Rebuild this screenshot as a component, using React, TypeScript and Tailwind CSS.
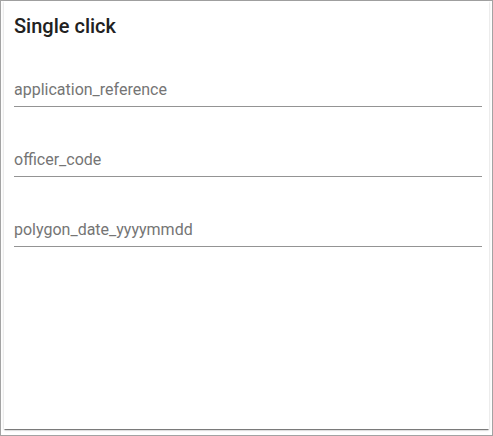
import React from "react";

const fields = ["application_reference", "officer_code", "polygon_date_yyyymmdd"];

export default function App() {
  return (
    <div
      className="w-[493px] h-[436px] border border-[#a3a3a3] bg-white flex flex-col"
      style={{ fontFamily: "Roboto, 'Liberation Sans', sans-serif" }}
    >
      <div className="ml-[3px] mr-[3px] h-[428px] bg-white shadow-[0_2px_1px_-1px_rgba(0,0,0,0.35),0_1px_1px_0_rgba(0,0,0,0.2),0_1px_3px_0_rgba(0,0,0,0.12)] pl-[10px] pr-[7px]">
        <div className="pt-[9px] text-[20px] leading-[32px] font-medium text-[#212121]">
          Single click
        </div>
        <div className="flex flex-col">
          {fields.map((f, i) => (
            <div key={f} className={i === 0 ? "mt-[36px]" : "mt-[41px]"}>
              <div className="border-b border-[#949494] pb-[4px] text-[16px] leading-[24px] text-[#757575]">
                {f}
              </div>
            </div>
          ))}
        </div>
      </div>
    </div>
  );
}
